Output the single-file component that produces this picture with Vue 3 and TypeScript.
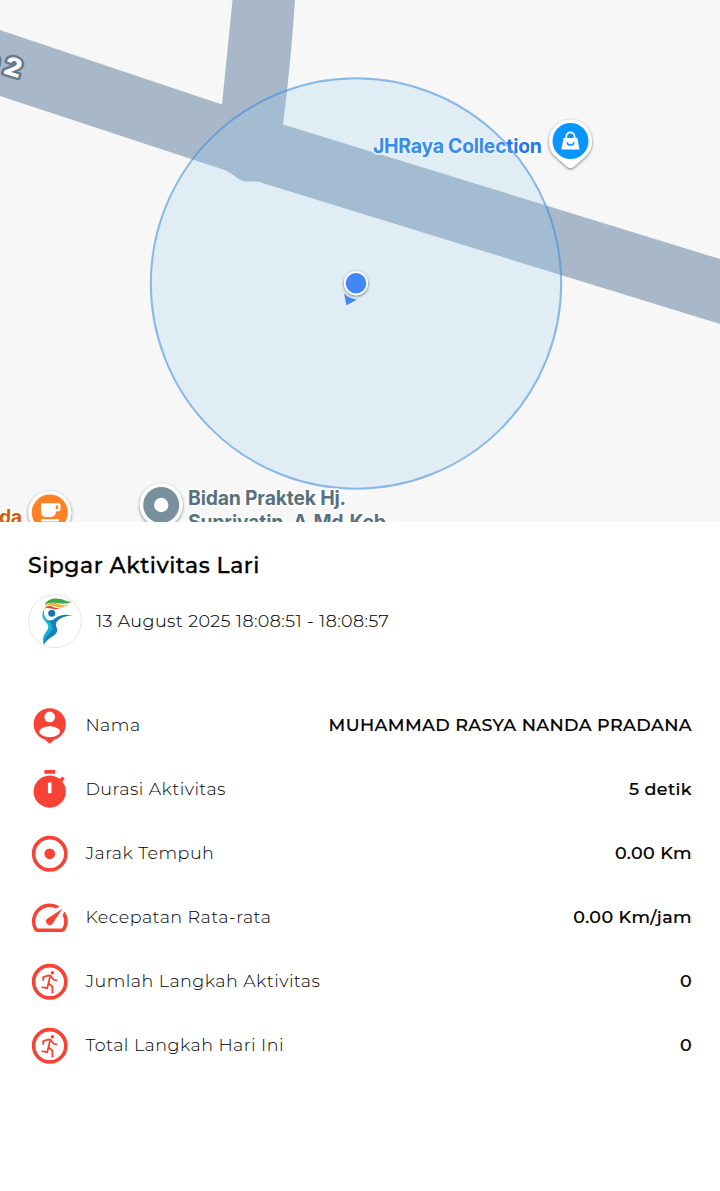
<template>
  <main class="activity">
    <svg class="map" width="720" height="522" viewBox="0 0 720 522">
      <defs>
        <filter id="shadow" x="-30%" y="-30%" width="160%" height="160%">
          <feDropShadow dx="0" dy="1" stdDeviation="1.5" flood-opacity="0.55" />
        </filter>
      </defs>
      <path
        class="map__road"
        d="M0 30L222 104.500L232.500 0H295Q291 62 283 124.500L720 259V324L264 183.500Q257 180.500 250 181.500Q240 182 234 175.500L226 170.500L0 96Z"
      />
      <g class="map__street" transform="rotate(17 12 67)">
        <text x="-18" y="78">0</text>
        <text x="4.500" y="75.500" textLength="17.500" lengthAdjust="spacingAndGlyphs">2</text>
      </g>

      <text class="map__label map__label--shop" x="373" y="152.500" textLength="169">JHRaya Collection</text>
      <circle class="map__radius" cx="356" cy="283.500" r="205.200" />
      <g filter="url(#shadow)">
        <path fill="#fff" d="M570.500 119.800a21.500 21.500 0 0 1 16.500 35.300L574 166.500q-3.500 3-7 0L554 155.100a21.500 21.500 0 0 1 16.500-35.300z" />
      </g>
      <circle cx="570.500" cy="141" r="18" fill="#0796ff" />
      <path fill="#fff" d="M563.500 138h13.800l2.200 11.500h-18.200z" />
      <path fill="none" stroke="#fff" stroke-width="1.800" d="M566.300 139v-2.500a4.100 4.100 0 0 1 8.200 0v2.500" />
      <path fill="none" stroke="#0796ff" stroke-width="1.500" d="M567.200 142.200a3.300 2.900 0 0 0 6.600 0" />

      <path fill="#4285f4" d="M344 293.500Q349 298.500 357 299.500L346.500 305.300Z" />
      <circle cx="356" cy="283.300" r="12" fill="#fff" filter="url(#shadow)" />
      <circle cx="356" cy="283.300" r="10.300" fill="#4285f4" />

      <text class="map__label map__label--cafe" x="-1" y="524" textLength="23">da</text>
      <circle cx="49.800" cy="512.500" r="21.500" fill="#fff" filter="url(#shadow)" />
      <circle cx="49.800" cy="512.500" r="18" fill="#ff8126" />
      <path
        fill="#fff"
        fill-rule="evenodd"
        d="M41 503.300h17.500q2 0 2 2v4q0 2-2 2h-2.300q-.5 5.700-5.700 5.700h-4.300q-5.200 0-5.200-5.200zM55.800 505.500v3.800h2.300v-3.800zM41 519.300h18v2.200h-18z"
      />

      <circle cx="161.200" cy="505" r="21.500" fill="#fff" filter="url(#shadow)" />
      <circle cx="161.200" cy="505" r="18" fill="#78909c" />
      <circle cx="161.200" cy="505" r="7.200" fill="#fff" />
      <text class="map__label map__label--clinic" x="188" y="504.500" textLength="158">Bidan Praktek Hj.</text>
      <text class="map__label map__label--clinic" x="188" y="528.500" textLength="198">Supriyatin, A.Md.Keb</text>
    </svg>

    <section class="detail">
      <h1 class="detail__title">Sipgar Aktivitas Lari</h1>
      <div class="detail__meta">
        <svg class="detail__logo" width="54" height="54" viewBox="0 0 54 54">
          <circle cx="27" cy="27.200" r="26.400" fill="#fff" stroke="#dedede" stroke-width=".8" />
          <g transform="translate(-.3 .8)">
            <path fill="#3fa64b" d="M17 10C21 2 31 3 38 6Q42 7.500 45 6.800Q39 10 31 8.500Q21 7 17 10Z" />
            <path fill="#f2b134" d="M16.500 12C21 6 29 8 33 10Q37 12 41 9Q36 14.500 29 12Q21 9.500 16.500 12Z" />
            <path fill="#e5443b" d="M16.300 14Q20 9.500 26 12.500Q30 14 33 12.300Q29 16 23.500 13.800Q19 12.300 16.300 14Z" />
            <path fill="#12b5d0" d="M16.500 14Q14.500 22 22 27.500Q28 33 21 40.500Q16.500 45 16 50Q13.500 43 18.500 37Q23 32 18 27Q12 21 16.500 14Z" />
            <circle cx="24" cy="18.400" r="3.500" fill="#1474b8" />
            <path fill="#1680bd" d="M19 25Q24 27 29 22.500Q34 18.500 44.500 20.500Q34 21.500 30 26Q27 29 29 33Q31 37 26 41Q19 45 16 50Q16 44 21 39Q27 34 23 29Z" />
          </g>
        </svg>
        <span class="detail__date">13 August 2025 18:08:51 - 18:08:57</span>
      </div>

      <ul class="stats">
        <li v-for="stat in stats" :key="stat.label" class="stats__row">
          <svg class="stats__icon" viewBox="-0.12 -0.15 24 24">
            <circle v-if="stat.ring" class="stats__ring" cx="12" cy="12" r="9" />
            <path :d="icons[stat.icon]" fill-rule="evenodd" />
            <path
              v-if="stat.icon === 'run'"
              class="stats__limbs"
              d="M8.400 11.500V9.400L11.300 8.400L12.600 8.700L13.700 10.400Q14.500 11.200 16 11.300M12.200 9L11.300 12.800L13.500 14.700V18.500M11.300 12.800L10.600 15.600L7.500 15"
            />
          </svg>
          <span class="stats__label">{{ stat.label }}</span>
          <span class="stats__value">{{ stat.value }}</span>
        </li>
      </ul>
    </section>
  </main>
</template>

<script setup lang="ts">
interface Stat {
  icon: string;
  label: string;
  value: string;
  ring?: boolean;
}

const icons: Record<string, string> = {
  person:
    'M12 2.200a9 9 0 0 0-9 8.900c0 4.200 2.800 7.500 6.400 8.700L12 22l2.600-2.200c3.600-1.200 6.400-4.500 6.400-8.700a9 9 0 0 0-9-8.900zM12 4.100a3 3 0 1 1 0 6 3 3 0 0 1 0-6zM12 12.200c2.400 0 5.800 1.200 5.800 3.100 0 1.500-3 3-5.800 3s-5.800-1.500-5.800-3c0-1.900 3.400-3.100 5.800-3.100z',
  timer:
    'M9 1h6v2H9zM19.030 7.390l1.420-1.420c-.43-.51-.9-.99-1.410-1.410l-1.420 1.420A8.960 8.960 0 0 0 12 4a9 9 0 1 0 7.030 3.390zM13 14h-2V8h2z',
  dot: 'M12 9a3 3 0 1 1 0 6 3 3 0 0 1 0-6z',
  speed:
    'M20.380 8.570l-1.230 1.850a8 8 0 0 1-.22 7.580H5.070A8 8 0 0 1 15.580 6.850l1.850-1.230A10 10 0 0 0 3.350 19a2 2 0 0 0 1.720 1h13.850a2 2 0 0 0 1.740-1 10 10 0 0 0-.27-10.440zM10.590 15.410a2 2 0 0 0 2.830 0l5.660-8.490-8.490 5.660a2 2 0 0 0 0 2.830z',
  run: 'M13.500 6a1 1 0 1 1 0 2 1 1 0 0 1 0-2z'
};

const stats: Stat[] = [
  { icon: 'person', label: 'Nama', value: 'MUHAMMAD RASYA NANDA PRADANA' },
  { icon: 'timer', label: 'Durasi Aktivitas', value: '5 detik' },
  { icon: 'dot', label: 'Jarak Tempuh', value: '0.00 Km', ring: true },
  { icon: 'speed', label: 'Kecepatan Rata-rata', value: '0.00 Km/jam' },
  { icon: 'run', label: 'Jumlah Langkah Aktivitas', value: '0', ring: true },
  { icon: 'run', label: 'Total Langkah Hari Ini', value: '0', ring: true }
];
</script>

<style>
body {
  margin: 0;
  background: #fff;
}
</style>

<style scoped>
.activity {
  width: 720px;
  height: 1191px;
  overflow: hidden;
  background: #fff;
  color: #000;
  font-family: Montserrat, Inter, 'Open Sans', sans-serif;
}

.map {
  display: block;
  background: #f7f7f7;
  font-family: Inter, Roboto, sans-serif;
}

.map__road {
  fill: #a9b8c9;
}

.map__radius {
  fill: rgba(146, 206, 241, 0.22);
  stroke: rgba(54, 136, 217, 0.55);
  stroke-width: 2;
}

.map__street {
  font-size: 25px;
  font-weight: 800;
  fill: #fff;
  stroke: #67798f;
  stroke-width: 5px;
  stroke-linejoin: round;
  paint-order: stroke;
}

.map__label {
  font-size: 19.5px;
  font-weight: 700;
  stroke: rgba(255, 255, 255, 0.85);
  stroke-width: 3.5px;
  stroke-linejoin: round;
  paint-order: stroke;
}

.map__label--shop {
  fill: #2479e8;
}

.map__label--cafe {
  fill: #d35b09;
}

.map__label--clinic {
  fill: #57717e;
}

.detail {
  padding: 28px 28px 0;
}

.detail__title {
  margin: 0;
  padding-top: 1px;
  font-size: 22px;
  line-height: 30px;
  font-weight: 500;
  letter-spacing: 0.5px;
  -webkit-text-stroke: 0.3px #000;
}

.detail__meta {
  display: flex;
  align-items: center;
  gap: 14px;
  margin-top: 13px;
}

.detail__logo {
  flex: none;
}

.detail__date {
  font-size: 17.5px;
  line-height: 24px;
  font-weight: 300;
  letter-spacing: 0.44px;
  -webkit-text-stroke: 0.1px #000;
}

.stats {
  margin: 45px 0 0;
  padding: 0;
  list-style: none;
}

.stats__row {
  display: flex;
  align-items: center;
  height: 64px;
  font-size: 17.5px;
  line-height: 22px;
  white-space: nowrap;
}

.stats__icon {
  flex: none;
  width: 43px;
  height: 43px;
  margin-right: 14.4px;
  fill: #f74336;
}

.stats__ring {
  fill: none;
  stroke: #f74336;
  stroke-width: 2;
}

.stats__limbs {
  fill: none;
  stroke: #f74336;
  stroke-width: 1;
}

.stats__label {
  font-weight: 300;
  letter-spacing: 0.48px;
}

.stats__value {
  margin-left: auto;
  font-weight: 500;
  letter-spacing: 0.4px;
  -webkit-text-stroke: 0.2px #000;
}
</style>
